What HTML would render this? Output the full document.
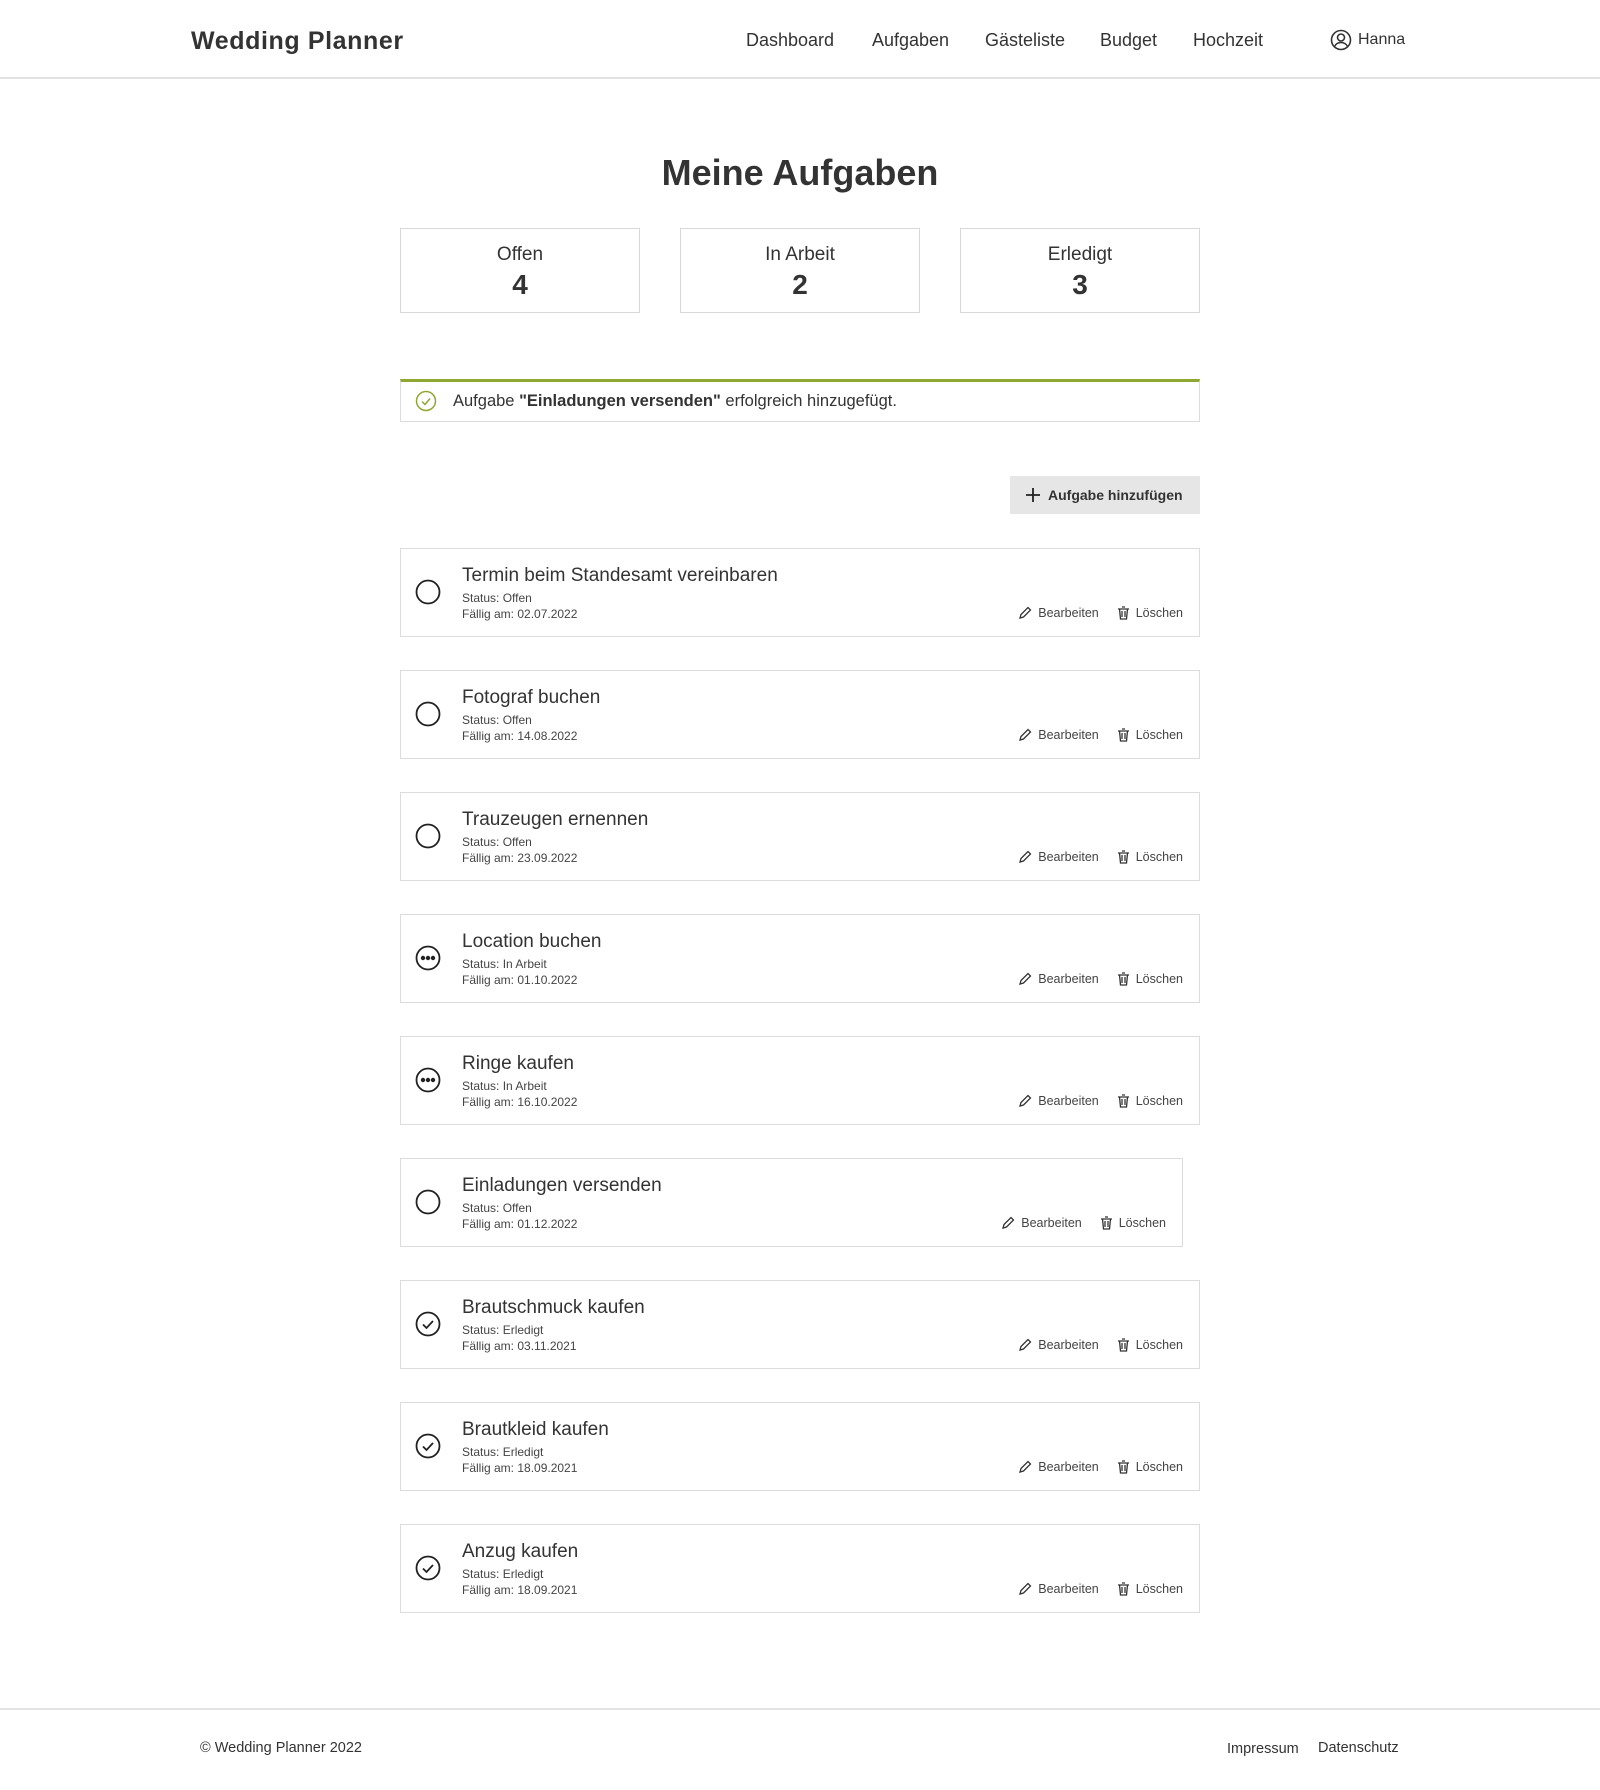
<!DOCTYPE html>
<html><head><meta charset="utf-8"><style>
*{box-sizing:border-box;margin:0;padding:0}
body{width:1600px;height:1790px;background:#fff;font-family:"Liberation Sans",sans-serif;color:#333;position:relative;overflow:hidden}
.a{position:absolute;white-space:nowrap}
.hdr{position:absolute;left:0;top:0;width:1600px;height:79px;border-bottom:2px solid #e3e3e3}
.nav{font-size:18px;color:#333;top:30px}
.stat{position:absolute;top:228px;width:240px;height:85px;border:1px solid #d8d8d8;text-align:center}
.stat .l{font-size:19px;margin-top:15px}
.stat .n{font-size:28px;font-weight:bold;margin-top:3px}
.card{position:absolute;left:400px;width:800px;height:89px;border:1px solid #dcdcdc}
.card .t{position:absolute;left:61px;top:16px;font-size:19px;color:#333}
.card .s{position:absolute;left:61px;top:41px;font-size:12px;color:#444;line-height:16px}
.card .ic{position:absolute;left:14px;top:30px}
.card .act{position:absolute;right:16px;top:57px;font-size:12.5px;color:#444;display:flex;align-items:center}
.card .act svg{margin-right:6px}
</style></head><body>
<div class="hdr"></div>
<div class="a" style="left:191px;top:27px;font-size:25px;font-weight:bold;letter-spacing:0.6px;color:#333">Wedding Planner</div>
<div class="a nav" style="left:746px">Dashboard</div>
<div class="a nav" style="left:872px">Aufgaben</div>
<div class="a nav" style="left:985px">Gästeliste</div>
<div class="a nav" style="left:1100px">Budget</div>
<div class="a nav" style="left:1193px">Hochzeit</div>
<svg class="a" style="left:1330px;top:29px" width="22" height="22" viewBox="0 0 22 22" fill="none" stroke="#333" stroke-width="1.6"><circle cx="11" cy="11" r="9.5"/><circle cx="11" cy="8.5" r="3.5"/><path d="M4.5 17.5c1.5-3 4-4 6.5-4s5 1 6.5 4"/></svg>
<div class="a" style="left:1358px;top:31px;font-size:16px">Hanna</div>

<div class="a" style="left:0;width:1600px;text-align:center;top:152px;font-size:36px;font-weight:bold;color:#333">Meine Aufgaben</div>

<div class="stat" style="left:400px"><div class="l">Offen</div><div class="n">4</div></div>
<div class="stat" style="left:680px"><div class="l">In Arbeit</div><div class="n">2</div></div>
<div class="stat" style="left:960px"><div class="l">Erledigt</div><div class="n">3</div></div>

<div class="a" style="left:400px;top:379px;width:800px;height:43px;border:1px solid #dcdcdc;border-top:3px solid #8fa832"></div>
<svg class="a" style="left:415px;top:390px" width="22" height="22" viewBox="0 0 22 22" fill="none" stroke="#8fa832" stroke-width="1.5"><circle cx="11" cy="11" r="9.5"/><path d="M7 11.5l3 3 5-6"/></svg>
<div class="a" style="left:453px;top:392px;font-size:16.5px;color:#333">Aufgabe <b>"Einladungen versenden"</b> erfolgreich hinzugefügt.</div>

<div class="a" style="left:1010px;top:476px;width:190px;height:38px;background:#e6e6e6"></div>
<svg class="a" style="left:1025px;top:487px" width="16" height="16" viewBox="0 0 16 16" stroke="#222" stroke-width="1.8"><path d="M8 1v14M1 8h14"/></svg>
<div class="a" style="left:1048px;top:487px;font-size:14px;font-weight:bold;color:#333">Aufgabe hinzufügen</div>

<div class="card" style="top:548px"><svg class="ic" width="26" height="26" viewBox="0 0 26 26" fill="none" stroke="#222" stroke-width="1.8"><circle cx="13" cy="13" r="11.5"/></svg><div class="t">Termin beim Standesamt vereinbaren</div><div class="s">Status: Offen<br>Fällig am: 02.07.2022</div><div class="act"><svg width="14" height="14" viewBox="0 0 14 14" fill="none" stroke="#333" stroke-width="1.3"><path d="M2 12l1-3.5L10 1.5l2.5 2.5L5.5 11z"/></svg>Bearbeiten<span style="width:18px"></span><svg width="13" height="14" viewBox="0 0 13 14" fill="none" stroke="#333" stroke-width="1.3"><path d="M1 3h11M5 1h3M2.5 3l1 10h6l1-10M5 5v6M8 5v6"/></svg>Löschen</div></div>

<div class="card" style="top:670px"><svg class="ic" width="26" height="26" viewBox="0 0 26 26" fill="none" stroke="#222" stroke-width="1.8"><circle cx="13" cy="13" r="11.5"/></svg><div class="t">Fotograf buchen</div><div class="s">Status: Offen<br>Fällig am: 14.08.2022</div><div class="act"><svg width="14" height="14" viewBox="0 0 14 14" fill="none" stroke="#333" stroke-width="1.3"><path d="M2 12l1-3.5L10 1.5l2.5 2.5L5.5 11z"/></svg>Bearbeiten<span style="width:18px"></span><svg width="13" height="14" viewBox="0 0 13 14" fill="none" stroke="#333" stroke-width="1.3"><path d="M1 3h11M5 1h3M2.5 3l1 10h6l1-10M5 5v6M8 5v6"/></svg>Löschen</div></div>

<div class="card" style="top:792px"><svg class="ic" width="26" height="26" viewBox="0 0 26 26" fill="none" stroke="#222" stroke-width="1.8"><circle cx="13" cy="13" r="11.5"/></svg><div class="t">Trauzeugen ernennen</div><div class="s">Status: Offen<br>Fällig am: 23.09.2022</div><div class="act"><svg width="14" height="14" viewBox="0 0 14 14" fill="none" stroke="#333" stroke-width="1.3"><path d="M2 12l1-3.5L10 1.5l2.5 2.5L5.5 11z"/></svg>Bearbeiten<span style="width:18px"></span><svg width="13" height="14" viewBox="0 0 13 14" fill="none" stroke="#333" stroke-width="1.3"><path d="M1 3h11M5 1h3M2.5 3l1 10h6l1-10M5 5v6M8 5v6"/></svg>Löschen</div></div>

<div class="card" style="top:914px"><svg class="ic" width="26" height="26" viewBox="0 0 26 26" fill="none" stroke="#222" stroke-width="1.8"><circle cx="13" cy="13" r="11.5"/><circle cx="8" cy="13" r="1.3" fill="#222"/><circle cx="13" cy="13" r="1.3" fill="#222"/><circle cx="18" cy="13" r="1.3" fill="#222"/></svg><div class="t">Location buchen</div><div class="s">Status: In Arbeit<br>Fällig am: 01.10.2022</div><div class="act"><svg width="14" height="14" viewBox="0 0 14 14" fill="none" stroke="#333" stroke-width="1.3"><path d="M2 12l1-3.5L10 1.5l2.5 2.5L5.5 11z"/></svg>Bearbeiten<span style="width:18px"></span><svg width="13" height="14" viewBox="0 0 13 14" fill="none" stroke="#333" stroke-width="1.3"><path d="M1 3h11M5 1h3M2.5 3l1 10h6l1-10M5 5v6M8 5v6"/></svg>Löschen</div></div>

<div class="card" style="top:1036px"><svg class="ic" width="26" height="26" viewBox="0 0 26 26" fill="none" stroke="#222" stroke-width="1.8"><circle cx="13" cy="13" r="11.5"/><circle cx="8" cy="13" r="1.3" fill="#222"/><circle cx="13" cy="13" r="1.3" fill="#222"/><circle cx="18" cy="13" r="1.3" fill="#222"/></svg><div class="t">Ringe kaufen</div><div class="s">Status: In Arbeit<br>Fällig am: 16.10.2022</div><div class="act"><svg width="14" height="14" viewBox="0 0 14 14" fill="none" stroke="#333" stroke-width="1.3"><path d="M2 12l1-3.5L10 1.5l2.5 2.5L5.5 11z"/></svg>Bearbeiten<span style="width:18px"></span><svg width="13" height="14" viewBox="0 0 13 14" fill="none" stroke="#333" stroke-width="1.3"><path d="M1 3h11M5 1h3M2.5 3l1 10h6l1-10M5 5v6M8 5v6"/></svg>Löschen</div></div>

<div class="card" style="top:1158px;width:783px"><svg class="ic" width="26" height="26" viewBox="0 0 26 26" fill="none" stroke="#222" stroke-width="1.8"><circle cx="13" cy="13" r="11.5"/></svg><div class="t">Einladungen versenden</div><div class="s">Status: Offen<br>Fällig am: 01.12.2022</div><div class="act"><svg width="14" height="14" viewBox="0 0 14 14" fill="none" stroke="#333" stroke-width="1.3"><path d="M2 12l1-3.5L10 1.5l2.5 2.5L5.5 11z"/></svg>Bearbeiten<span style="width:18px"></span><svg width="13" height="14" viewBox="0 0 13 14" fill="none" stroke="#333" stroke-width="1.3"><path d="M1 3h11M5 1h3M2.5 3l1 10h6l1-10M5 5v6M8 5v6"/></svg>Löschen</div></div>

<div class="card" style="top:1280px"><svg class="ic" width="26" height="26" viewBox="0 0 26 26" fill="none" stroke="#222" stroke-width="1.8"><circle cx="13" cy="13" r="11.5"/><path d="M8 13.5l3.5 3.5 6.5-7"/></svg><div class="t">Brautschmuck kaufen</div><div class="s">Status: Erledigt<br>Fällig am: 03.11.2021</div><div class="act"><svg width="14" height="14" viewBox="0 0 14 14" fill="none" stroke="#333" stroke-width="1.3"><path d="M2 12l1-3.5L10 1.5l2.5 2.5L5.5 11z"/></svg>Bearbeiten<span style="width:18px"></span><svg width="13" height="14" viewBox="0 0 13 14" fill="none" stroke="#333" stroke-width="1.3"><path d="M1 3h11M5 1h3M2.5 3l1 10h6l1-10M5 5v6M8 5v6"/></svg>Löschen</div></div>

<div class="card" style="top:1402px"><svg class="ic" width="26" height="26" viewBox="0 0 26 26" fill="none" stroke="#222" stroke-width="1.8"><circle cx="13" cy="13" r="11.5"/><path d="M8 13.5l3.5 3.5 6.5-7"/></svg><div class="t">Brautkleid kaufen</div><div class="s">Status: Erledigt<br>Fällig am: 18.09.2021</div><div class="act"><svg width="14" height="14" viewBox="0 0 14 14" fill="none" stroke="#333" stroke-width="1.3"><path d="M2 12l1-3.5L10 1.5l2.5 2.5L5.5 11z"/></svg>Bearbeiten<span style="width:18px"></span><svg width="13" height="14" viewBox="0 0 13 14" fill="none" stroke="#333" stroke-width="1.3"><path d="M1 3h11M5 1h3M2.5 3l1 10h6l1-10M5 5v6M8 5v6"/></svg>Löschen</div></div>

<div class="card" style="top:1524px"><svg class="ic" width="26" height="26" viewBox="0 0 26 26" fill="none" stroke="#222" stroke-width="1.8"><circle cx="13" cy="13" r="11.5"/><path d="M8 13.5l3.5 3.5 6.5-7"/></svg><div class="t">Anzug kaufen</div><div class="s">Status: Erledigt<br>Fällig am: 18.09.2021</div><div class="act"><svg width="14" height="14" viewBox="0 0 14 14" fill="none" stroke="#333" stroke-width="1.3"><path d="M2 12l1-3.5L10 1.5l2.5 2.5L5.5 11z"/></svg>Bearbeiten<span style="width:18px"></span><svg width="13" height="14" viewBox="0 0 13 14" fill="none" stroke="#333" stroke-width="1.3"><path d="M1 3h11M5 1h3M2.5 3l1 10h6l1-10M5 5v6M8 5v6"/></svg>Löschen</div></div>

<div class="a" style="left:0;top:1708px;width:1600px;border-top:2px solid #e3e3e3"></div>
<div class="a" style="left:200px;top:1740px;font-size:14.5px;color:#333">© Wedding Planner 2022</div>
<div class="a" style="left:1227px;top:1741px;font-size:14.5px;color:#333">Impressum</div>
<div class="a" style="left:1318px;top:1740px;font-size:14.5px;color:#333">Datenschutz</div>
</body></html>
